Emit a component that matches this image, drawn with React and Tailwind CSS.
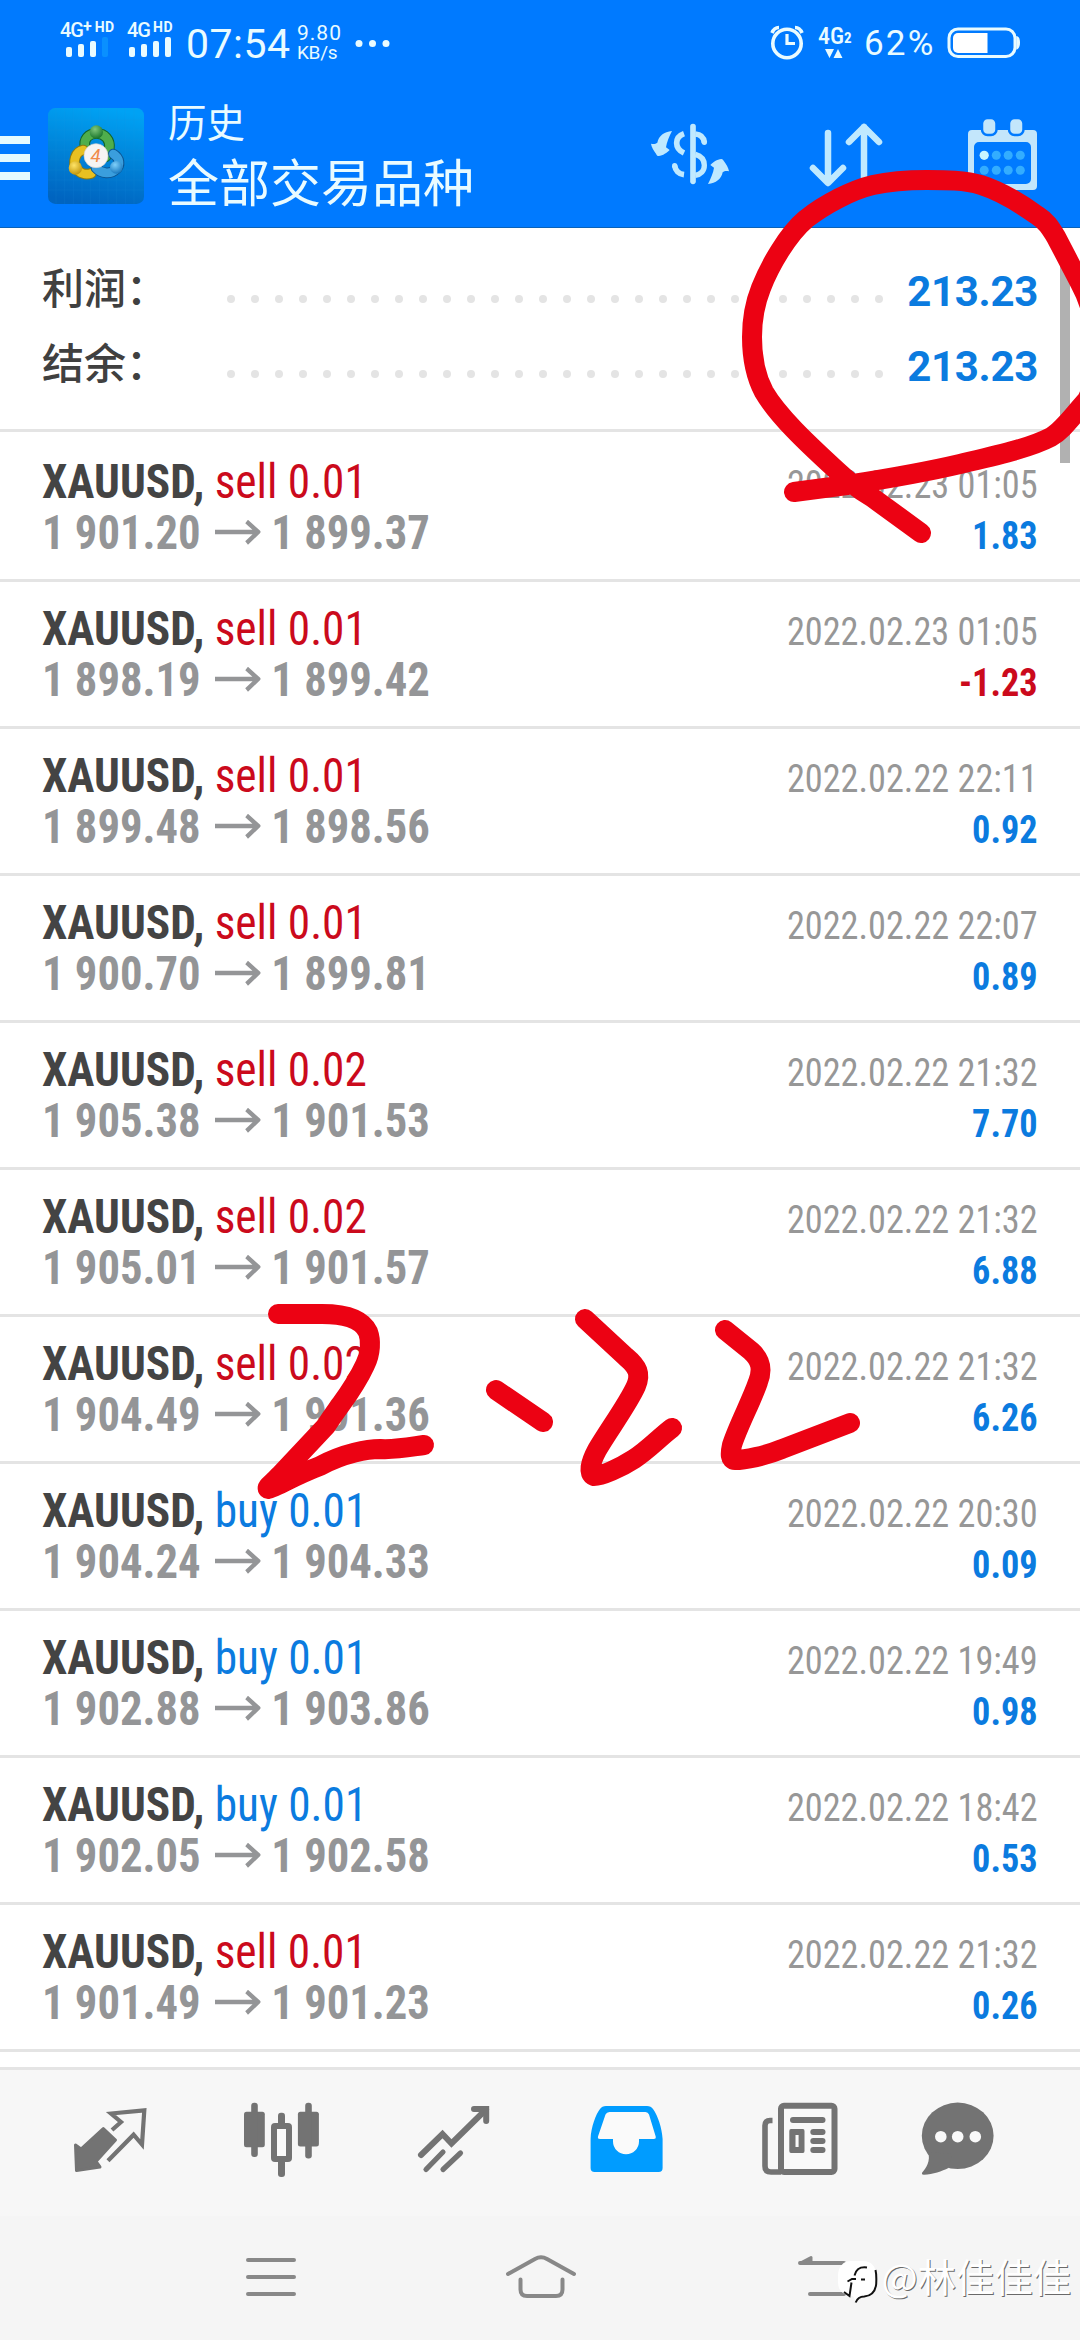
const DEALS = [
  { type: "sell", volume: "0.01", open: "1 901.20", close: "1 899.37", time: "2022.02.23 01:05", profit: "1.83" },
  { type: "sell", volume: "0.01", open: "1 898.19", close: "1 899.42", time: "2022.02.23 01:05", profit: "-1.23" },
  { type: "sell", volume: "0.01", open: "1 899.48", close: "1 898.56", time: "2022.02.22 22:11", profit: "0.92" },
  { type: "sell", volume: "0.01", open: "1 900.70", close: "1 899.81", time: "2022.02.22 22:07", profit: "0.89" },
  { type: "sell", volume: "0.02", open: "1 905.38", close: "1 901.53", time: "2022.02.22 21:32", profit: "7.70" },
  { type: "sell", volume: "0.02", open: "1 905.01", close: "1 901.57", time: "2022.02.22 21:32", profit: "6.88" },
  { type: "sell", volume: "0.02", open: "1 904.49", close: "1 901.36", time: "2022.02.22 21:32", profit: "6.26" },
  { type: "buy", volume: "0.01", open: "1 904.24", close: "1 904.33", time: "2022.02.22 20:30", profit: "0.09" },
  { type: "buy", volume: "0.01", open: "1 902.88", close: "1 903.86", time: "2022.02.22 19:49", profit: "0.98" },
  { type: "buy", volume: "0.01", open: "1 902.05", close: "1 902.58", time: "2022.02.22 18:42", profit: "0.53" },
  { type: "sell", volume: "0.01", open: "1 901.49", close: "1 901.23", time: "2022.02.22 21:32", profit: "0.26" },
];

const DOTS = Array.from({ length: 28 }, (_, i) => i);

const Signal = ({ label, plus, weak, className }) => (
  <div className={`flex flex-col ${className}`}>
    <div className="flex h-[16px] items-start whitespace-nowrap text-[20px] font-medium leading-[18px]">
      <span className="tracking-[-1px]">{label}</span>
      {plus && <span className="text-[16px] font-bold leading-[12px]">+</span>}
      <span className="ml-[3px] text-[14px] font-bold leading-[12px] tracking-[0.5px]">HD</span>
    </div>
    <svg className="ml-[5px]" width="46" height="20" fill="#e9fbff">
      <rect x="1" y="10" width="6" height="10" rx="2" />
      <rect x="13" y="7" width="6" height="13" rx="2" />
      <rect x="25" y="4" width="6" height="16" rx="2" />
      <rect x="37" y="0" width="6" height="20" rx="2" fill={weak ? "#0a90ff" : "#e9fbff"} />
    </svg>
  </div>
);

const StatusBar = () => (
  <div className="flex h-[86px] items-start pl-[60px] pt-[21px] text-[#e9fbff]">
    <Signal label="4G" plus weak className="w-[67px]" />
    <Signal label="4G" className="w-[59px] [&>svg]:ml-[1px]" />
    <div className="w-[105px] text-[41px] leading-[46px] tracking-[0.5px]">07:54</div>
    <div className="ml-[6px] w-[54px] text-[21px] leading-[20px] tracking-[1px]">
      <div className="mt-[2px]">9.80</div>
      <div className="text-[19px] tracking-[-0.3px]">KB/s</div>
    </div>
    <svg className="mt-[18px]" width="40" height="10" fill="#e9fbff">
      <circle cx="8" cy="4.500" r="3.500" />
      <circle cx="21.500" cy="4.500" r="3.500" />
      <circle cx="35" cy="4.500" r="3.500" />
    </svg>

    <svg className="ml-[377px] mt-[3px]" width="36" height="38" fill="none" stroke="#e9fbff">
      <circle cx="19" cy="19.500" r="14.200" strokeWidth="3.600" />
      <path d="M19 10v9.500h8" strokeWidth="3.200" />
      <path d="M4 9C5.500 5 8 3.500 11 3.500M27 3.500c3 0 5.500 1.500 7 5.500" strokeWidth="3.600" />
    </svg>
    <div className="ml-[14px] mt-[4px] flex w-[36px] flex-col">
      <div className="flex h-[22px] items-end font-['Roboto_Condensed'] text-[24px] font-medium leading-[22px]">
        4G<span className="text-[15px] font-bold leading-[17px]">2</span>
      </div>
      <svg className="ml-[7px] mt-px" width="20" height="12" fill="#e9fbff">
        <path d="M0 1h9L4.500 10zM8.500 10h9L13 1z" />
      </svg>
    </div>
    <div className="ml-[10px] w-[83px] text-[35px] leading-[45px] tracking-[2.2px]">62%</div>
    <svg className="mt-[6px]" width="74" height="32" fill="none">
      <rect x="2" y="2" width="66" height="27.500" rx="9" stroke="#e9fbff" strokeWidth="3" />
      <path d="M11 6h29.500v20H11a5 5 0 0 1-5-5V11a5 5 0 0 1 5-5z" fill="#fff" />
      <path d="M70 10c3 1 3 10 0 11.500z" fill="#e9fbff" stroke="#e9fbff" strokeWidth="1.500" />
    </svg>
  </div>
);

const AppLogo = () => (
  <svg width="96" height="96" viewBox="144 24 288 288">
    <defs>
      <linearGradient id="tile" x1="0.600" y1="0" x2="0.400" y2="1">
        <stop offset="0" stopColor="#00a2f4" />
        <stop offset="0.500" stopColor="#0083d8" />
        <stop offset="1" stopColor="#0064c0" />
      </linearGradient>
      <radialGradient id="green" cx="0.400" cy="0.300" r="0.800">
        <stop offset="0" stopColor="#7fc77b" />
        <stop offset="1" stopColor="#0d6b22" />
      </radialGradient>
      <radialGradient id="gold" cx="0.400" cy="0.300" r="0.800">
        <stop offset="0" stopColor="#ffe467" />
        <stop offset="1" stopColor="#b98c00" />
      </radialGradient>
      <radialGradient id="azure" cx="0.400" cy="0.300" r="0.800">
        <stop offset="0" stopColor="#7fd0fa" />
        <stop offset="1" stopColor="#0a6db8" />
      </radialGradient>
    </defs>
    <rect x="144" y="24" width="288" height="288" rx="22" fill="url(#tile)" />
    <path
      d="M168 24v288M194 24v288M220 24v288M246 24v288M272 24v288M298 24v288M324 24v288M350 24v288M376 24v288M402 24v288M144 60h288M144 90h288M144 120h288M144 150h288M144 180h288M144 210h288M144 240h288M144 270h288"
      stroke="#1e9be8"
      strokeOpacity="0.180"
      strokeWidth="2"
    />
    <g fill="none" strokeLinecap="round">
      <path d="M256 144C248 118 266 100 290 100s42 20 38 46c-1 8-4 16-10 24" stroke="#12652a" strokeWidth="32" />
      <path d="M256 144C248 118 266 100 290 100s42 20 38 46c-1 8-4 16-10 24" stroke="#4fae4c" strokeWidth="26" />
      <path d="M250 150c-24 4-34 38-20 56 10 14 26 20 44 14" stroke="#8d7a10" strokeWidth="32" />
      <path d="M250 150c-24 4-34 38-20 56 10 14 26 20 44 14" stroke="#e8c021" strokeWidth="26" />
      <path d="M340 162c20 12 22 34 8 46-14 16-44 14-60-4" stroke="#0b5593" strokeWidth="32" />
      <path d="M340 162c20 12 22 34 8 46-14 16-44 14-60-4" stroke="#3a9edd" strokeWidth="26" />
    </g>
    <circle cx="289" cy="96" r="20" fill="url(#green)" />
    <circle cx="226" cy="204" r="20" fill="url(#gold)" />
    <circle cx="349" cy="202" r="19" fill="url(#azure)" />
    <circle cx="288" cy="167" r="36" fill="#f6f4f3" stroke="#d8d2cf" strokeWidth="2" />
    <text x="287" y="187" textAnchor="middle" fontFamily="Roboto" fontSize="56" fontStyle="italic" fill="#f08a4a">
      4
    </text>
  </svg>
);

const CurrencyIcon = () => (
  <svg width="80" height="64" viewBox="30 36 240 192" fill="none" stroke="#bfe9ff" strokeWidth="17">
    <path d="M159 50v164" strokeLinecap="round" />
    <path d="M166 72c16 1 25 11 27 25" />
    <circle cx="193" cy="97" r="8" fill="#bfe9ff" stroke="none" />
    <path d="M132 71c-14 5-22 15-22 28 0 14 9 24 22 30" />
    <path d="M166 133c18 5 27 17 27 33 0 17-11 28-27 30" strokeWidth="16" />
    <path d="M132 194c-16-2-26-13-28-27" />
    <circle cx="104" cy="167" r="8" fill="#bfe9ff" stroke="none" />
    <g fill="#bfe9ff" stroke="none">
      <path d="M96 63c-8 16-16 34-18 49l11 8c-8 8-20 17-33 18-4 0-6-3-8-7-6-8-14-20-15-30 8 2 14 1 19-3 4-20 20-33 44-35z" />
      <path d="M204 222c8-16 16-34 18-49l-11-8c8-8 20-17 33-18 4 0 6 3 8 7 6 8 14 20 15 30-8-2-14-1-19 3-4 20-20 33-44 35z" />
    </g>
  </svg>
);

const SortIcon = () => (
  <svg width="76" height="66" fill="none" stroke="#bfe9ff" strokeWidth="6.500" strokeLinecap="round" strokeLinejoin="round">
    <path d="M20 12v48M5 47l15 15 15-15" />
    <path d="M56 58V6M41 21L56 6l15 15" />
  </svg>
);

const CalendarIcon = () => (
  <svg width="70" height="72" fill="#c3e6fb">
    <path d="M4 12h61a4 4 0 0 1 4 4v52a4 4 0 0 1-4 4H4a4 4 0 0 1-4-4V16a4 4 0 0 1 4-4zm7 12a5 5 0 0 0-5 5v32a5 5 0 0 0 5 5h47a5 5 0 0 0 5-5V29a5 5 0 0 0-5-5z" />
    <rect x="14" y="0" width="14.500" height="17" rx="5.500" stroke="#007aff" strokeWidth="2.500" />
    <rect x="41" y="0" width="14.500" height="17" rx="5.500" stroke="#007aff" strokeWidth="2.500" />
    <circle cx="16.200" cy="37.300" r="4.600" fill="#c8f5ff" />
    <g fill="#33adff">
      <circle cx="28.300" cy="37.300" r="4.500" />
      <circle cx="40.200" cy="37.300" r="4.500" />
      <circle cx="52.300" cy="37.300" r="4.500" />
      <circle cx="16.200" cy="52.300" r="4.500" />
      <circle cx="28.300" cy="52.300" r="4.500" />
      <circle cx="40.200" cy="52.300" r="4.500" />
      <circle cx="52.300" cy="52.300" r="4.500" />
    </g>
  </svg>
);

const Header = () => (
  <header className="h-[228px] shrink-0 border-b border-[#0a62b8] bg-[#007aff] font-['Roboto']">
    <StatusBar />
    <div className="flex items-start">
      <div className="mt-[50px] flex w-[30px] flex-col gap-[10px]">
        <span className="h-2 bg-[#e4faff]" />
        <span className="h-2 bg-[#e4faff]" />
        <span className="h-2 bg-[#e4faff]" />
      </div>
      <div className="ml-[18px] mt-[22px]">
        <AppLogo />
      </div>
      <div className="ml-[24px] mt-[11px] w-[482px] font-['Noto_Sans_CJK_SC',sans-serif] text-[#e9fbff]">
        <div className="text-[38.500px] leading-[46px]">历史</div>
        <div className="mt-[7px] text-[51px] leading-[60px]">全部交易品种</div>
      </div>
      <div className="mt-[36px]">
        <CurrencyIcon />
      </div>
      <div className="ml-[78px] mt-[35px]">
        <SortIcon />
      </div>
      <div className="ml-[84px] mt-[32px]">
        <CalendarIcon />
      </div>
    </div>
  </header>
);

const SummaryRow = ({ label, value }) => (
  <div className="flex h-[75px] items-center">
    <div className="mb-[9px] w-[185px] font-['Noto_Sans_CJK_SC',sans-serif] text-[42px] font-medium leading-[60px] text-[#404040]">{label}</div>
    <div className="mt-[17px] flex w-[656px] justify-between">
      {DOTS.map((i) => (
        <span key={i} className="size-[8px] rounded-full bg-[#e4e4e4]" />
      ))}
    </div>
    <div className="mt-[2px] flex-1 text-right text-[42px] font-bold leading-[50px] tracking-[-0.3px] text-[#0b7bdf]">{value}</div>
  </div>
);

const DealRow = ({ deal }) => (
  <li className="flex h-[147px] justify-between border-b-[3px] border-[#e4e4e4] px-[42px] font-['Roboto_Condensed']">
    <div className="pt-[21px] text-[48px] leading-[51px]">
      <div className="origin-left scale-x-[0.944] whitespace-nowrap">
        <span className="font-bold text-[#444]">XAUUSD, </span>
        <span className={deal.type === "buy" ? "text-[#0b7bdf]" : "text-[#cb0a1c]"}>
          {deal.type} {deal.volume}
        </span>
      </div>
      <div className="flex origin-left scale-x-[0.93] items-center font-bold text-[#949597]">
        <span>{deal.open}</span>
        <svg className="ml-[15px] mr-[12px]" width="49" height="26" fill="none" stroke="#949597" strokeWidth="4.500">
          <path d="M0 12h46M34 1.500L46.500 12 34 23" />
        </svg>
        <span>{deal.close}</span>
      </div>
    </div>
    <div className="origin-right scale-x-[0.93] pt-[25px] text-right text-[39px] leading-[51px]">
      <div className="text-[#979797]">{deal.time}</div>
      <div className={deal.profit.startsWith("-") ? "font-bold text-[#cb0a1c]" : "font-bold text-[#0b7bdf]"}>{deal.profit}</div>
    </div>
  </li>
);

const TabBar = () => (
  <nav className="flex h-[149px] shrink-0 gap-24 border-t-[3px] border-[#e4e4e4] bg-[#f7f7f7] pl-[72px] pt-8 text-[#737373] [&>svg]:shrink-0 [&>svg]:overflow-visible">
    <svg width="76" height="76" fill="none" stroke="currentColor">
      <path d="M31.300 26.500L43.500 38 24 59.500l4 5.500-23.500 3.500L3.500 43 9 47z" fill="currentColor" strokeWidth="3" strokeLinejoin="round" />
      <path d="M40 28l9-8-10-8.500 33.300-3.200L70 42.500l-8.400-9.800L36 58.700" strokeWidth="4.200" />
    </svg>
    <svg width="76" height="76" fill="currentColor">
      <rect y="9.700" width="20.800" height="35.600" rx="2.500" />
      <rect x="7.200" y="0.700" width="6.600" height="54.300" rx="3" />
      <rect x="53.900" y="9.700" width="21" height="34.800" rx="2.500" />
      <rect x="61.200" y="0.700" width="6.600" height="55.800" rx="3" />
      <rect x="34" y="10.700" width="7" height="16" rx="3" />
      <rect x="34" y="56" width="7" height="19" rx="3" />
      <rect x="30" y="23.900" width="15" height="33.200" rx="1" fill="#fafafa" stroke="currentColor" strokeWidth="6" />
    </svg>
    <svg width="76" height="76" fill="none" stroke="currentColor" strokeWidth="6" strokeLinecap="round">
      <path d="M5 53l21.500-21 9 9.500L70 7.500" strokeLinejoin="miter" />
      <path d="M58 7h12.200v12" />
      <path d="M10 67.500L27 50M27 67.500L44.500 51" strokeWidth="5.200" />
    </svg>
    <svg width="76" height="76" fill="#009cff">
      <path d="M2.600 66V37C3 25 8 12 12 7q2-3 6-3h41q4 0 6 3c5 7 9 19 9.600 30v29q0 4-4 4h-64q-4 0-4-4z" />
      <path
        d="M21.500 10h36q2.500 0 3.500 2.500l6.700 22q.500 2.500-2 2.500H51v2.500a13 12.700 0 0 1-26 0V37H12q-2.600 0-2-2.500l7.500-22Q18.700 10 21.500 10z"
        fill="#fafafa"
      />
    </svg>
    <svg width="76" height="76" fill="currentColor">
      <rect x="21" y="3.700" width="53.500" height="66.300" rx="3" fill="#f9f9f9" stroke="currentColor" strokeWidth="6" />
      <path d="M12.500 18.500H10q-5 0-5 5V64q0 6 6 6h10" fill="none" stroke="currentColor" strokeWidth="5.600" />
      <rect x="30" y="15" width="35.500" height="6" rx="3" />
      <path d="M31 27h12q1.500 0 1.500 2v20q0 2-1.500 2H31q-1.700 0-1.700-2V29q0-2 1.700-2zm4.500 6v12h3.100V33z" />
      <rect x="50.300" y="27" width="15.200" height="6" rx="3" />
      <rect x="50.300" y="36" width="15.200" height="6" rx="3" />
      <rect x="50.300" y="45" width="15.200" height="6" rx="3" />
    </svg>
    <svg className="-ml-3" width="76" height="76" fill="currentColor">
      <ellipse cx="37.700" cy="33.800" rx="35.900" ry="33.200" />
      <path d="M8 50c3 9-2 16-5.800 20.500-.700 1.500 0 2.300 1.800 2.200C13 72.500 22 69 28.500 66L32 52z" />
      <g fill="#fafafa">
        <circle cx="20.800" cy="34.700" r="5.800" />
        <circle cx="37.700" cy="34.700" r="5.800" />
        <circle cx="55.300" cy="34.700" r="5.800" />
      </g>
    </svg>
  </nav>
);

const SystemNav = () => (
  <div className="flex h-[124px] shrink-0 items-start bg-[#f5f5f5] pl-[235px] pt-[24px]">
    <svg width="72" height="72" stroke="#888" strokeWidth="4" strokeLinecap="round">
      <path d="M13 20h46M13 37h46M13 54h46" />
    </svg>
    <svg className="ml-[198px]" width="72" height="72" fill="none" stroke="#888" strokeWidth="4" strokeLinecap="round">
      <path d="M3 34l27-15q6-3.500 12 0l27 15M15.500 39.500v10q0 6.500 6.500 6.500h29q6.500 0 6.500-6.500v-10" />
    </svg>
    <svg className="ml-[217px]" width="72" height="72" fill="none" stroke="#888" strokeWidth="4" strokeLinecap="round">
      <path d="M6 23h44M16 54h34" />
      <path d="M6.500 23L17 17.500V23z" fill="#888" strokeWidth="3" strokeLinejoin="round" />
    </svg>
  </div>
);

const Watermark = () => (
  <div className="absolute bottom-[29px] right-[9px] flex items-center text-white">
    <svg width="42" height="46" className="mr-[3px]">
      <path d="M14 3h12c8 0 13 5 13 14v8c0 10-5 14-12 14-4 0-6 2-8 5l-3-6C6 37 1 33 1 24v-6C1 9 6 3 14 3z" fill="#fff" />
      <path d="M38.500 12c1 4 1 8 .700 14-1 9-6 12-12 12.500-4 0-7 2-8.500 6" fill="none" stroke="#111" strokeWidth="2" />
      <path d="M30 9.500c-8-1-11 2-12.500 8M10.500 23.500l4.500-2.500h4M24 21.500h4M14.500 24.500L12.500 38 7 34" fill="none" stroke="#111" strokeWidth="2" />
    </svg>
    <span className="mb-[10px] font-['Noto_Sans_CJK_SC',sans-serif] text-[38.300px] leading-[50px] [text-shadow:1px_1px_0_#6a6a6a]">@林佳佳佳</span>
  </div>
);

// freehand marker strokes drawn over the list
const Marker = () => (
  <svg
    className="pointer-events-none absolute left-0 top-0"
    width="1080"
    height="2340"
    fill="none"
    stroke="#ec0213"
    strokeWidth="20"
    strokeLinecap="round"
    strokeLinejoin="round"
  >
    <path d="M794 492L847 485C892 478 926 472 960 464C998 455 1030 448 1051 437C1062 431 1070 419 1087 400C1102 370 1100 320 1080 283L1056 237C1050 227 1046 221 1038 216C1020 203 1000 191 981 185C965 180 945 180 927 180C909 180 891 181 873 185C852 190 825 204 806 219C788 234 770 265 761 288C755 303 752 318 752 337C752 358 756 377 764 392C778 416 808 444 833 467C846 479 856 488 873 498L921 533" />
    <path d="M278 1314H322C346 1314 362 1319 368 1332C371 1340 371 1353 365 1365C353 1391 340 1404 326 1426L280 1475C272 1484 266 1487 268 1489C272 1489 296 1475 320 1466C344 1453 368 1449 380 1449C396 1450 410 1447 424 1445" />
    <path d="M496 1390L543 1422" />
    <path d="M585 1319L626 1357C638 1367 641 1374 636 1386C628 1404 608 1431 597 1450C590 1463 588 1474 594 1476C602 1476 620 1468 634 1459C648 1450 660 1437 672 1428" />
    <path d="M725 1330L751 1351C761 1360 763 1369 758 1382C752 1400 738 1426 732 1445C730 1454 730 1460 735 1460C745 1460 765 1456 782 1449L850 1423" />
  </svg>
);

const App = () => (
  <div className="relative flex h-[2340px] w-[1080px] flex-col overflow-hidden bg-white font-['Roboto','Noto_Sans_CJK_SC',sans-serif]">
    <Header />
    <main className="relative h-[1839px] shrink-0">
      <section className="h-[204px] border-b-[3px] border-[#e4e4e4] px-[42px] pt-[25px]">
        <SummaryRow label="利润：" value="213.23" />
        <SummaryRow label="结余：" value="213.23" />
      </section>
      <ul className="pt-[3px]">
        {DEALS.map((deal, i) => (
          <DealRow key={i} deal={deal} />
        ))}
      </ul>
      <div className="absolute right-[10px] top-[26px] h-[209px] w-[10px] bg-[#b1b1b1]" />
    </main>
    <TabBar />
    <SystemNav />
    <Watermark />
    <Marker />
  </div>
);

export default App;
